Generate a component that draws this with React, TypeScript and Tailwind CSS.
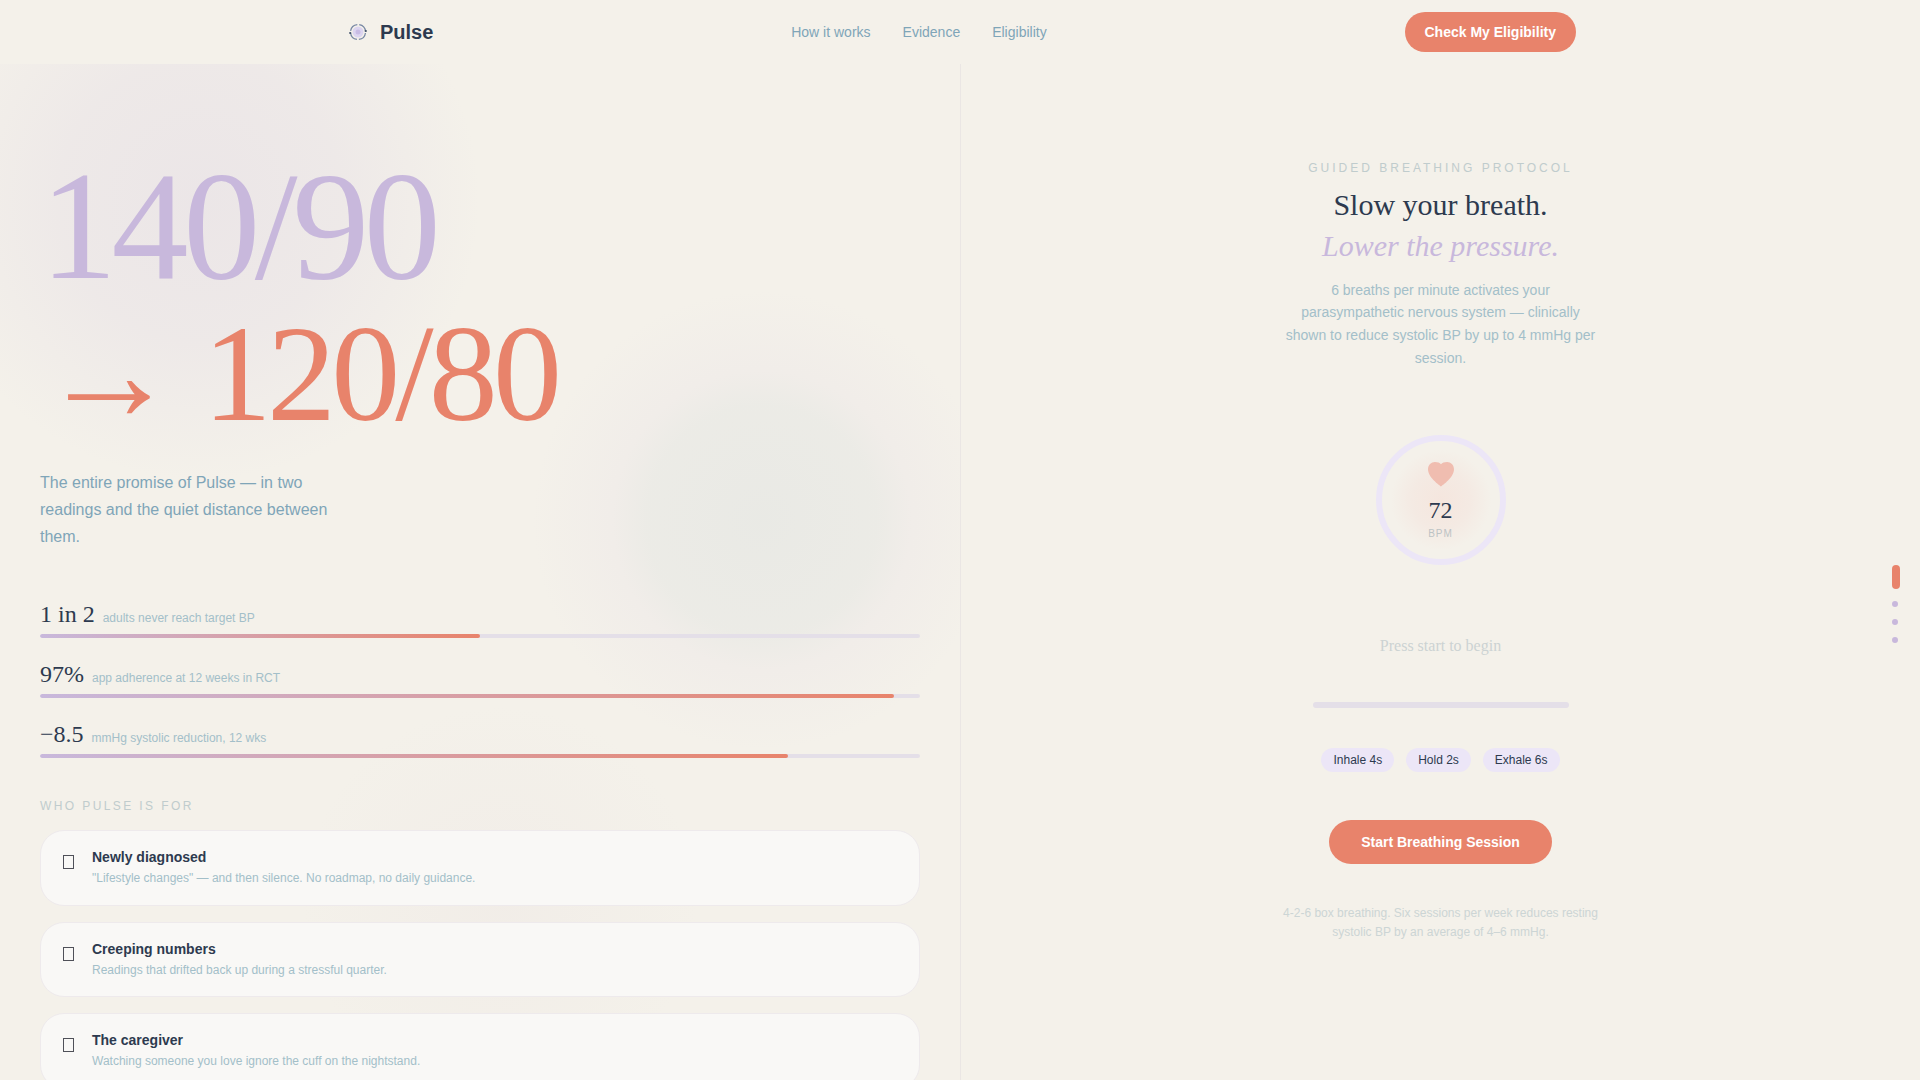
const NAV_LINKS = [
    { label: "How it works", href: "#how" },
    { label: "Evidence", href: "#evidence" },
    { label: "Eligibility", href: "#eligibility" },
];

const STATS = [
    { value: "1 in 2", label: "adults never reach target BP", percent: 50 },
    { value: "97%", label: "app adherence at 12 weeks in RCT", percent: 97 },
    { value: "−8.5", label: "mmHg systolic reduction, 12 wks", percent: 85 },
];

const AUDIENCES = [
    {
        title: "Newly diagnosed",
        text: "\"Lifestyle changes\" — and then silence. No roadmap, no daily guidance.",
    },
    {
        title: "Creeping numbers",
        text: "Readings that drifted back up during a stressful quarter.",
    },
    {
        title: "The caregiver",
        text: "Watching someone you love ignore the cuff on the nightstand.",
    },
];

const PHASES = ["Inhale 4s", "Hold 2s", "Exhale 6s"];

function Logo() {
    return (
        <svg viewBox="0 0 28 28" className="size-7" fill="none" aria-hidden="true">
            <circle cx="14" cy="14" r="5.5" fill="#dcd5f0" />
            <circle cx="14" cy="14" r="2.5" fill="#c8bce4" />
            <circle cx="14" cy="14" r="7.5" stroke="#7888a4" strokeWidth="1.3" strokeDasharray="9.8 2" strokeDashoffset="-1" />
            <circle cx="21.8" cy="13" r="1.1" fill="#3c4d66" />
            <circle cx="6.2" cy="15" r="1.1" fill="#3c4d66" />
        </svg>
    );
}

function Navbar() {
    return (
        <header className="z-10 h-16 shrink-0 bg-[#f4f1ea]">
            <div className="mx-auto flex h-full max-w-7xl items-center justify-between px-6">
                <a href="#" className="flex items-center gap-2 text-xl font-bold text-[#2d3a4f]">
                    <Logo />
                    Pulse
                </a>
                <nav className="flex gap-8 text-sm text-[#7fa5b8]">
                    {NAV_LINKS.map((link) => (
                        <a key={link.href} href={link.href}>
                            {link.label}
                        </a>
                    ))}
                </nav>
                <button
                    type="button"
                    className="h-10 rounded-full bg-[#e8836b] px-5 text-sm font-bold text-white"
                >
                    Check My Eligibility
                </button>
            </div>
        </header>
    );
}

function Stat({ value, label, percent }: { value: string; label: string; percent: number }) {
    return (
        <div>
            <div className="mb-1 flex items-baseline gap-2">
                <span className="font-['Liberation_Serif',serif] text-2xl text-[#2d3a4f]">{value}</span>
                <span className="text-xs text-[#a3bfc9]">{label}</span>
            </div>
            <div className="h-1 overflow-hidden rounded-full bg-[#e4dfe8]">
                <div
                    className="h-full rounded-full bg-linear-to-r/srgb from-[#c8b8dc] to-[#e8836b]"
                    style={{ width: `${percent}%` }}
                />
            </div>
        </div>
    );
}

function AudienceCard({ title, text }: { title: string; text: string }) {
    return (
        <li className="flex items-start gap-4 rounded-3xl border border-[#eeeaec] bg-[#f9f8f6] px-5 py-4">
            <span className="mx-0.5 mt-2 h-3.5 w-[11px] border border-[#4f5058]" />
            <div>
                <h3 className="text-sm font-bold text-[#2d3a4f]">{title}</h3>
                <p className="mt-0.5 text-xs leading-relaxed text-[#a3bfc9]">{text}</p>
            </div>
        </li>
    );
}

function StoryPanel() {
    return (
        <section className="relative isolate overflow-x-hidden overflow-y-auto px-10 pt-20 [scrollbar-width:none]">
            {/* soft colour washes behind the copy */}
            <div className="absolute -top-36 -left-20 -z-10 size-[560px] rounded-full bg-[radial-gradient(closest-side,#c8b8dc32,#c8b8dc24_50%,#c8b8dc00)]" />
            <div className="absolute top-[226px] -right-8 -z-10 size-[460px] rounded-full bg-[radial-gradient(closest-side,#a3b8c422,#a3b8c41a_50%,#c8b8dc12_65%,#c8b8dc00)]" />
            <div className="absolute top-[640px] left-[300px] -z-10 size-[400px] rounded-full bg-[radial-gradient(closest-side,#d8c4d018,#d8c4d000)]" />

            <h1 className="font-['Liberation_Serif',serif]">
                <span className="block text-[154px] leading-[164px] tracking-[-0.035em] text-[#c8b8dc]">140/90</span>
                <span className="block text-[138px] leading-[132px] tracking-[-0.035em] text-[#e8836b]">→ 120/80</span>
            </h1>

            <p className="mt-[29px] max-w-xs leading-[27px] text-[#7fa5b8]">
                The entire promise of Pulse — in two readings and the quiet distance between them.
            </p>

            <div className="mt-12 space-y-5">
                {STATS.map((stat) => (
                    <Stat key={stat.value} {...stat} />
                ))}
            </div>

            <h2 className="mt-10 text-xs tracking-[0.2em] text-[#c0cccd] uppercase">Who Pulse is for</h2>
            <ul className="mt-4 space-y-4 pb-10">
                {AUDIENCES.map((item) => (
                    <AudienceCard key={item.title} {...item} />
                ))}
            </ul>
        </section>
    );
}

function HeartMeter() {
    return (
        <div className="mt-[65px] flex size-[130px] flex-col items-center rounded-full border-[6px] border-[#ece6f7] bg-[radial-gradient(circle,#f5e6de_0,#f4eae3_35%,#f4f1ea_60%)] pt-5">
            <svg viewBox="0 0 28 26" className="h-[26px] w-7" aria-hidden="true">
                <path
                    d="M14 25.5C12.5 24.3 1 16.5 1 8.3C1 4 4.2 1 7.9 1C10.6 1 12.8 1.8 14 3.2C15.2 1.8 17.4 1 20.1 1C23.8 1 27 4 27 8.3C27 16.5 15.5 24.3 14 25.5Z"
                    fill="#f0bdb0"
                />
            </svg>
            <span className="mt-[7px] font-['Liberation_Serif',serif] text-2xl text-[#2d3a4f]">72</span>
            <span className="text-[10px] leading-4 tracking-widest text-[#bcc3c4]">BPM</span>
        </div>
    );
}

function BreathingPanel() {
    return (
        <section className="flex flex-col items-center overflow-hidden border-l border-[#eae6e4] px-10 pt-24 text-center">
            <p className="text-xs tracking-[0.25em] text-[#c0cccd] uppercase">Guided breathing protocol</p>
            <h2 className="mt-2 font-['Liberation_Serif',serif] text-3xl leading-snug text-[#2d3a4f]">
                Slow your breath.
                <br />
                <em className="text-[#c8b8dc]">Lower the pressure.</em>
            </h2>
            <p className="mt-3 max-w-xs text-sm leading-relaxed text-[#a3bfc9]">
                6 breaths per minute activates your parasympathetic nervous system — clinically shown to
                reduce systolic BP by up to 4 mmHg per session.
            </p>

            <HeartMeter />

            <p className="mt-[69px] font-['Liberation_Serif',serif] text-base text-[#ccd3d3]">
                Press start to begin
            </p>
            <div className="mt-11 h-1.5 w-64 rounded-full bg-[#e4dfe8]" />
            <div className="mt-10 flex gap-3">
                {PHASES.map((phase) => (
                    <span key={phase} className="rounded-full bg-[#ece6f7] px-3 py-1 text-xs text-[#2d3a4f]">
                        {phase}
                    </span>
                ))}
            </div>
            <button
                type="button"
                className="mt-12 h-11 rounded-full bg-[#e8836b] px-8 text-sm font-bold text-white"
            >
                Start Breathing Session
            </button>
            <p className="mt-10 max-w-xs text-xs leading-[19px] text-[#ccd5d5]">
                4-2-6 box breathing. Six sessions per week reduces resting systolic BP by an average of 4–6
                mmHg.
            </p>
        </section>
    );
}

function SectionDots() {
    return (
        <div className="fixed top-1/2 right-5 mt-16 flex -translate-y-1/2 flex-col gap-3">
            <span className="h-6 w-2 rounded-full bg-[#e8836b]" />
            <span className="size-1.5 rounded-full bg-[#c8b8dc]" />
            <span className="size-1.5 rounded-full bg-[#c8b8dc]" />
            <span className="size-1.5 rounded-full bg-[#c8b8dc]" />
        </div>
    );
}

export default function App() {
    return (
        <div className="flex h-screen flex-col bg-[#f4f1ea] font-['Liberation_Sans',sans-serif]">
            <Navbar />
            <main className="grid min-h-0 flex-1 grid-cols-2">
                <StoryPanel />
                <BreathingPanel />
            </main>
            <SectionDots />
        </div>
    );
}
